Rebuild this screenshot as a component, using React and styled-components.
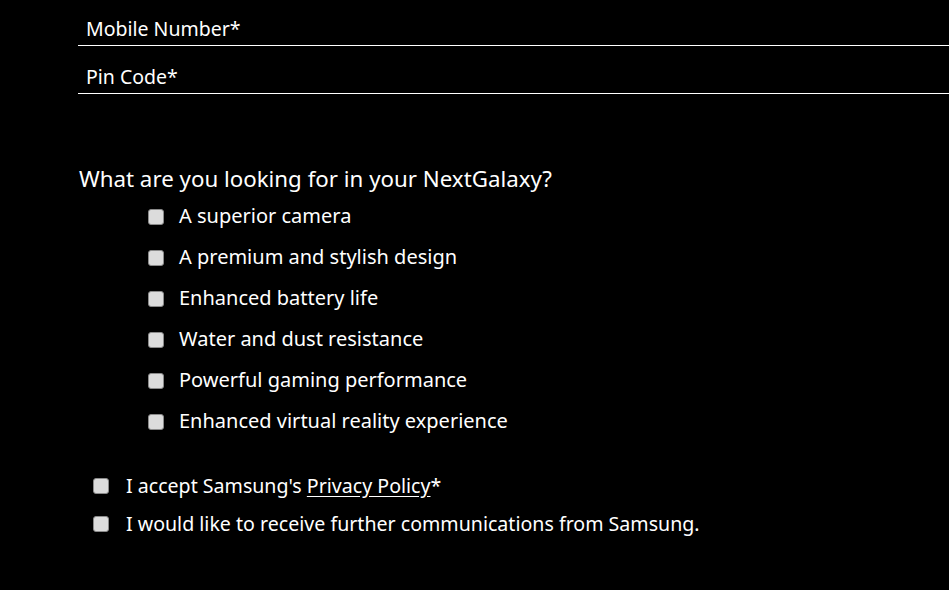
import React from 'react'
import styled, { createGlobalStyle } from 'styled-components'

const GlobalStyle = createGlobalStyle`
  html, body {
    margin: 0;
    padding: 0;
    background: #000;
    overflow: hidden;
  }
  body {
    font-family: 'Noto Sans', 'Open Sans', sans-serif;
    color: #fff;
  }
`

export const Form = styled.form`
  display: flex;
  flex-direction: column;
  width: 100%;
  padding-left: 78px;
  margin-top: -2px;
  box-sizing: border-box;
`

export const Input = styled.input`
  display: block;
  width: 100%;
  height: 48px;
  box-sizing: border-box;
  padding: 14px 8px 0;
  margin: 0;
  border: none;
  border-bottom: 1px solid #fff;
  background: transparent;
  outline: none;
  color: #fff;
  font-size: 19.5px;
  font-family: 'Noto Sans', 'Open Sans', sans-serif;

  &::placeholder {
    color: #fff;
    opacity: 1;
  }
`

export const Question = styled.h3`
  margin: 69px 0 0 1px;
  font-weight: 400;
  font-size: 22.3px;
  line-height: 32px;
`

export const OptionList = styled.div`
  display: flex;
  flex-direction: column;
  padding-left: ${p => p.indent}px;
  margin-top: ${p => p.top || 0}px;
`

export const Option = styled.label`
  display: flex;
  align-items: center;
  gap: ${p => p.gap}px;
  height: ${p => p.rowHeight}px;
  font-size: ${p => p.size || 20}px;

  a {
    color: #fff;
    text-decoration: underline;
    text-underline-offset: 3px;
  }
`

export const Box = styled.input.attrs({ type: 'checkbox' })`
  appearance: none;
  flex: none;
  width: 16px;
  height: 16px;
  margin: 2px 0 0;
  border: 1px solid #8a8a8a;
  border-radius: 3px;
  background: #dcdcdc;
`

const interests = [
  'A superior camera',
  'A premium and stylish design',
  'Enhanced battery life',
  'Water and dust resistance',
  'Powerful gaming performance',
  'Enhanced virtual reality experience',
]

const App = () => {
  return (
    <>
      <GlobalStyle />
      <Form onSubmit={e => e.preventDefault()}>
        <Input placeholder="Mobile Number*" name="mobile" />
        <Input placeholder="Pin Code*" name="pin" />

        <Question>What are you looking for in your NextGalaxy?</Question>
        <OptionList indent={70}>
          {interests.map(item => (
            <Option key={item} gap={15} rowHeight={41}>
              <Box />
              {item}
            </Option>
          ))}
        </OptionList>

        <OptionList indent={15} top={25}>
          <Option gap={17} rowHeight={38} size={19.6}>
            <Box />
            <span>
              I accept Samsung's <a href="#privacy">Privacy Policy</a>*
            </span>
          </Option>
          <Option gap={17} rowHeight={38} size={19.6}>
            <Box />
            I would like to receive further communications from Samsung.
          </Option>
        </OptionList>
      </Form>
    </>
  )
}

export default App
